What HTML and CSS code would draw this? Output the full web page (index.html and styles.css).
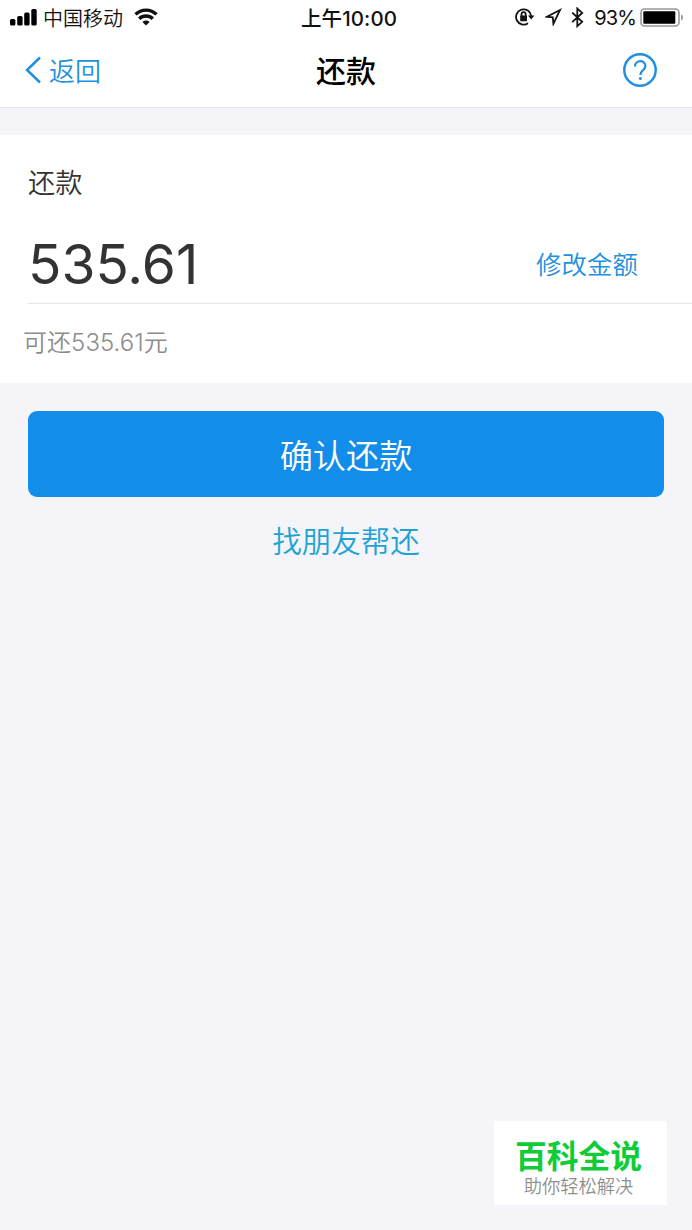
FILE: index.html
```html
<!DOCTYPE html>
<html lang="zh-CN">
  <head>
    <meta charset="UTF-8" />
    <meta name="viewport" content="width=device-width, initial-scale=1.0" />
    <title>还款</title>
    <link rel="stylesheet" href="styles.css">
  </head>

  <body>
    <header class="status-bar">
      <div class="status-left">
        <svg class="signal" width="27" height="18" viewBox="0 0 27 18">
          <rect x="0" y="11" width="5.4" height="6.5" rx="1.6" />
          <rect x="7.2" y="8" width="5.4" height="9.5" rx="1.6" />
          <rect x="14.2" y="4.5" width="5.4" height="13" rx="1.6" />
          <rect x="21.3" y="1" width="5.4" height="16.5" rx="1.6" />
        </svg>
        <span class="carrier">中国移动</span>
        <svg class="wifi" width="24" height="18" viewBox="0 0 24 18">
          <path d="M1.5 6.4a15 15 0 0 1 21 0" />
          <path d="M5.2 10.8a9.8 9.8 0 0 1 13.6 0" />
          <path class="solid" d="M12 17.6l-3.6-3.7a5.2 5.2 0 0 1 7.2 0z" />
        </svg>
      </div>
      <div class="clock">上午10:00</div>
      <div class="status-right">
        <svg class="lock" width="20" height="18" viewBox="0 0 20 18">
          <path d="M16.2 8A7.6 7.6 0 1 0 13 15.2" />
          <path class="solid" d="M13 7.4h6.4l-3.2 4z" />
          <rect class="solid" x="5.2" y="7.6" width="6.8" height="5.6" rx=".6" />
          <path d="M6.5 8V6.3a2.1 2.1 0 0 1 4.2 0V8" />
        </svg>
        <svg class="location" width="17" height="18" viewBox="0 0 17 18">
          <path d="M15 2L1.9 8.8l5.9.6.6 6.4z" />
        </svg>
        <svg class="bluetooth" width="13" height="21" viewBox="0 0 13 21">
          <path d="M1.2 5.6l10 9.2-4.9 4.4V1.5l4.9 4.4-10 9.2" />
        </svg>
        <span class="percent">93%</span>
        <svg class="battery" width="44" height="19" viewBox="0 0 44 19">
          <rect class="shell" x="1" y="1" width="38" height="17" rx="3.5" />
          <rect x="3.3" y="3.3" width="32" height="12.4" rx="1" />
          <path class="cap" d="M41 6.5q2 .7 2 3t-2 3z" />
        </svg>
      </div>
    </header>

    <nav class="nav-bar">
      <a class="back" href="#">
        <svg width="17" height="28" viewBox="0 0 17 28">
          <path d="M15 1.5L2 14l13 12.5" />
        </svg>
        <span>返回</span>
      </a>
      <h1 class="title">还款</h1>
      <a class="help" href="#">
        <svg width="34" height="34" viewBox="0 0 34 34">
          <circle cx="17" cy="17" r="15.7" />
          <path class="mark" d="M12 13.4c0-7 10.4-6.8 10.4-.4 0 4.2-5 4.2-5 9" />
          <circle class="dot" cx="17.4" cy="25.6" r="1.5" />
        </svg>
      </a>
    </nav>

    <main>
      <section class="card">
        <div class="label">还款</div>
        <div class="amount-row">
          <span class="amount">535.61</span>
          <a class="edit" href="#">修改金额</a>
        </div>
        <div class="hint">可还535.61元</div>
      </section>

      <button class="confirm" type="button">确认还款</button>
      <a class="friend" href="#">找朋友帮还</a>
    </main>

    <div class="watermark">
      <div class="brand">百科全说</div>
      <div class="slogan">助你轻松解决</div>
    </div>
  </body>
</html>
```
FILE: styles.css
```css
* {
  box-sizing: border-box;
}

body {
  margin: 0;
  height: 1230px;
  background: #f4f4f9;
  color: #333;
  font-family: Inter, "Noto Sans CJK SC", sans-serif;
  font-weight: 350;
  overflow: hidden;
}

a {
  color: #2390de;
  text-decoration: none;
}

svg {
  display: block;
  flex: none;
}

/* Status bar */
.status-bar {
  display: grid;
  grid-template-columns: 1fr auto 1fr;
  align-items: center;
  height: 35px;
  padding: 0 8px 0 10px;
  background: #fff;
  color: #111;
  font-size: 20px;
  font-weight: 400;
  line-height: 35px;
}

.status-left,
.status-right {
  display: flex;
  align-items: center;
}

.status-left svg,
.status-right svg {
  margin-top: -1px;
}

.status-left .signal {
  margin-top: -2px;
}

.status-right {
  justify-content: flex-end;
}

.carrier {
  margin: 0 11px 0 6px;
  padding-top: 3px;
  font-weight: 350;
  line-height: 32px;
}

.clock {
  font-size: 20.5px;
  font-weight: 500;
  padding: 2px 0 0 4px;
  letter-spacing: 0.1px;
  line-height: 33px;
}

.percent {
  padding-top: 1px;
  letter-spacing: -0.9px;
  line-height: 34px;
}

.wifi path,
.lock path,
.location path,
.bluetooth path {
  fill: none;
  stroke: #111;
  stroke-width: 1.8;
}

.wifi path {
  stroke-width: 3.4;
}

.wifi .solid,
.lock .solid {
  fill: #111;
  stroke: none;
}

.location {
  margin-left: 10px;
}

.bluetooth {
  margin: 0 10px 0 9px;
}

.battery {
  margin-left: 4px;
}

.battery .shell {
  fill: none;
  stroke: #999;
  stroke-width: 1.6;
}

.battery .cap {
  fill: #999;
}

/* Navigation */
.nav-bar {
  display: grid;
  grid-template-columns: 1fr auto 1fr;
  align-items: center;
  height: 73px;
  padding: 0 35px 3px 25px;
  background: #fff;
  border-bottom: 1px solid #e4e4e6;
}

.back {
  display: flex;
  align-items: center;
  gap: 7px;
  font-size: 26px;
  line-height: 40px;
}

.back span {
  padding-top: 4px;
}

.back path,
.help path,
.help circle {
  fill: none;
  stroke: #2390de;
  stroke-width: 2.5;
}

.help .mark {
  stroke-width: 2.2;
}

.title {
  margin: 0;
  padding: 3px 0 0 10px;
  color: #000;
  font-size: 30px;
  font-weight: 500;
  line-height: 40px;
}

.help {
  justify-self: end;
}

.help .dot {
  fill: #2390de;
  stroke: none;
}

/* Repayment card */
.card {
  height: 248px;
  margin-top: 27px;
  padding: 29px 0 0 28px;
  background: #fff;
}

.label {
  font-size: 27.2px;
  line-height: 40px;
}

.amount-row {
  display: flex;
  justify-content: space-between;
  align-items: center;
  height: 100px;
  padding: 21px 54px 0 0;
  border-bottom: 1px solid #e6e6e8;
}

.amount {
  font-size: 55px;
  font-weight: 400;
  line-height: 60px;
}

.edit {
  padding-top: 2px;
  font-size: 25.5px;
  line-height: 40px;
}

.hint {
  margin: 19px 0 0 -5px;
  color: #8c8c8c;
  font-size: 24px;
  letter-spacing: 0.05px;
  line-height: 40px;
}

.confirm {
  display: block;
  width: 636px;
  height: 86px;
  margin: 28px auto 0;
  padding: 4px 0 0;
  border: 0;
  border-radius: 9px;
  background: #128de9;
  color: #fff;
  font-family: inherit;
  font-size: 33.2px;
  font-weight: 350;
  line-height: 82px;
}

.friend {
  display: block;
  margin-top: 24px;
  color: #1da3d4;
  font-size: 29.5px;
  line-height: 40px;
  text-align: center;
}

/* Corner badge */
.watermark {
  position: absolute;
  right: 25px;
  bottom: 25px;
  width: 173px;
  height: 84px;
  padding: 16px 4px 0 0;
  background: #fff;
  text-align: center;
}

.brand {
  color: #10cc38;
  font-size: 31.8px;
  font-weight: 700;
  line-height: 40px;
}

.slogan {
  color: #8f8f8f;
  font-size: 18.3px;
  line-height: 19px;
}
```
